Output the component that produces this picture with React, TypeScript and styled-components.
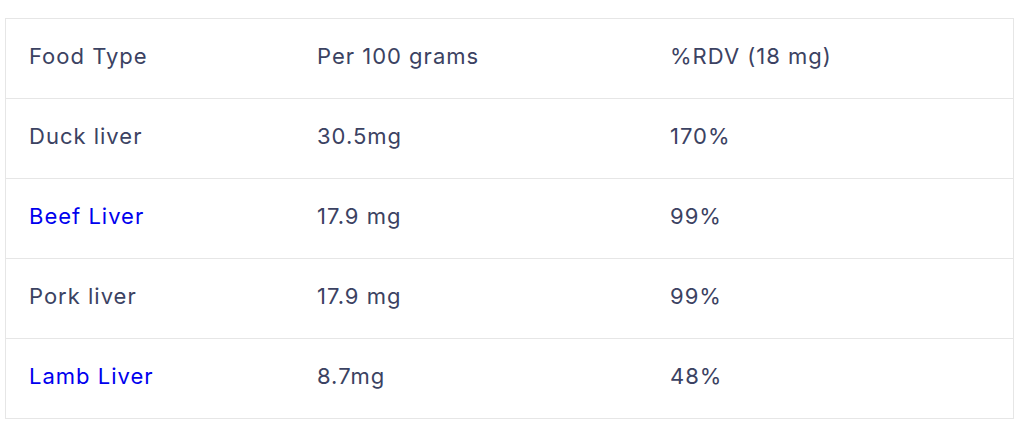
import styled, { createGlobalStyle } from 'styled-components'

const GlobalStyle = createGlobalStyle`
  html, body {
    margin: 0;
    padding: 0;
    background: #ffffff;
  }
  body {
    font-family: Inter, "Noto Sans", sans-serif;
  }
`;

const Page = styled.div`
  padding: 18px 16px 16px 5px;
`;

const Table = styled.table`
  width: 1009px;
  border-collapse: collapse;
  border: 1px solid #e6e6e6;
  color: #3b4262;
  font-size: 22px;
  letter-spacing: 1px;
`;

const Row = styled.tr`
  height: 80px;
  border-bottom: 1px solid #e6e6e6;
`;

const Cell = styled.td<{ $width?: number }>`
  padding: 0 22px 6px 23px;
  vertical-align: middle;
  text-align: left;
  font-weight: 400;
  width: ${props => (props.$width ? `${props.$width}px` : 'auto')};
`;

const Link = styled.a`
  color: #0000ee;
  text-decoration: none;
`;

interface Food {
  name: string,
  link: boolean,
  amount: string,
  rdv: string,
}

const foods: Food[] = [
  { name: 'Duck liver', link: false, amount: '30.5mg', rdv: '170%' },
  { name: 'Beef Liver', link: true, amount: '17.9 mg', rdv: '99%' },
  { name: 'Pork liver', link: false, amount: '17.9 mg', rdv: '99%' },
  { name: 'Lamb Liver', link: true, amount: '8.7mg', rdv: '48%' },
];

export default function App() {
  return (
    <Page>
      <GlobalStyle />
      <Table>
        <tbody>
          <Row>
            <Cell as="th" $width={243}>Food Type</Cell>
            <Cell as="th" $width={308}>Per 100 grams</Cell>
            <Cell as="th">%RDV (18 mg)</Cell>
          </Row>
          {foods.map(food => (
            <Row key={food.name}>
              <Cell>{food.link ? <Link href="#">{food.name}</Link> : food.name}</Cell>
              <Cell>{food.amount}</Cell>
              <Cell>{food.rdv}</Cell>
            </Row>
          ))}
        </tbody>
      </Table>
    </Page>
  )
}
